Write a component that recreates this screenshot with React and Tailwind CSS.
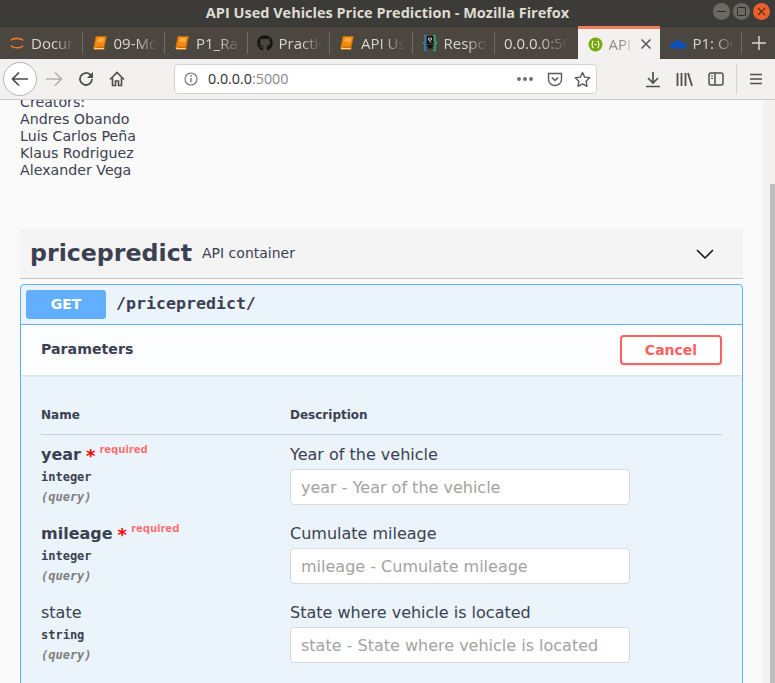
import React from 'react';
import { FaGithub } from 'react-icons/fa';

const uiFont = "font-['Open_Sans','Noto_Sans',sans-serif]";
const dejavu = "font-['DejaVu_Sans',sans-serif]";
const mono = "font-['DejaVu_Sans_Mono',monospace]";

const BookIcon = () => (
  <svg width="16" height="16" viewBox="0 0 16 16">
    <path d="M4 1.500h10.500L12 12H2z" fill="#f58a0b" stroke="#c96a00" strokeWidth="0.8" />
    <path d="M2 12c-.6 1.500 0 2.500 1 2.500h9l.4-2H3.500" fill="#ffd9a8" stroke="#c96a00" strokeWidth="0.8" />
    <path d="M6 4h6M5.500 6h6" stroke="#ffd9a8" strokeWidth="0.8" />
  </svg>
);

const JupyterIcon = () => (
  <svg width="16" height="16" viewBox="0 0 16 16" fill="none">
    <path d="M2 5.500C3.500 2.600 12.500 2.600 14 5.500" stroke="#f37726" strokeWidth="1.600" />
    <path d="M2 10.500C3.500 13.400 12.500 13.400 14 10.500" stroke="#f37726" strokeWidth="1.600" />
  </svg>
);

const RIcon = () => (
  <svg width="16" height="18" viewBox="0 0 16 18" fill="none">
    <path d="M5 1.500H3v6L1.500 9 3 10.500v6h2" stroke="#2f8fe0" strokeWidth="1.200" />
    <path d="M11 1.500h2v6L14.500 9 13 10.500v6h-2" stroke="#1fc9a0" strokeWidth="1.200" />
    <rect x="5" y="2" width="6" height="8" fill="#111" />
    <path d="M6.500 4h3v2h-3zM7 6l2 3" stroke="#ddd" strokeWidth="0.8" />
    <path d="M8 9v5M5.500 11.500 8 14.500l2.500-3z" fill="#111" stroke="#111" strokeWidth="1.200" />
  </svg>
);

const SwaggerIcon = () => (
  <svg width="15" height="15" viewBox="0 0 15 15" fill="none">
    <circle cx="7.500" cy="7.500" r="7" fill="#7aa90f" />
    <path d="M5.500 4C4 4.500 4.500 6.500 4 7.500 4.500 8.500 4 10.500 5.500 11M9.500 4c1.500.5 1 2.500 1.500 3.500-.5 1-0 3-1.500 3.500" stroke="#fff" strokeWidth="1.100" />
    <path d="M6.300 7.500h2.400" stroke="#fff" strokeWidth="1" />
  </svg>
);

const CloudIcon = () => (
  <svg width="18" height="14" viewBox="0 0 18 14">
    <path d="M2.500 12.500C.5 12.500 0 9.500 2 8.800 2 6 5 5 6.500 6.200 7.800 2.500 12.500 3 13 6.500c2.800-.2 4.500 1.500 4.500 3.500s-1.300 2.500-2.500 2.500z" fill="#0f4fb5" />
  </svg>
);

const tabs = [
  { icon: <JupyterIcon />, label: 'Documentation' },
  { icon: <BookIcon />, label: '09-Model' },
  { icon: <BookIcon />, label: 'P1_Random' },
  { icon: <FaGithub size={16} color="#151515" />, label: 'Practical' },
  { icon: <BookIcon />, label: 'API Used' },
  { icon: <RIcon />, label: 'Response' },
  { icon: null, label: '0.0.0.0:5000' },
  { icon: <SwaggerIcon />, label: 'API Used', active: true },
  { icon: <CloudIcon />, label: 'P1: OneDrive' },
];

function Tab({ icon, label, active, last }) {
  if (active) {
    return (
      <div className="w-[82px] h-[33px] -mt-[1px] shrink-0 bg-[#f2f1ef] border-t-[3px] border-[#ee7f5b] flex items-center pl-[10px] pr-[8px] gap-[6px] relative z-10">
        {icon}
        <span className="flex-1 overflow-hidden whitespace-nowrap text-[15px] text-[#8d8d8d] [mask-image:linear-gradient(to_right,black_55%,transparent)]">{label}</span>
        <svg width="12" height="12" viewBox="0 0 12 12" className="shrink-0">
          <path d="M1.500 1.500l9 9M10.500 1.500l-9 9" stroke="#555" strokeWidth="1.500" />
        </svg>
      </div>
    );
  }
  return (
    <div className="w-[82.500px] h-full shrink-0 flex items-center relative pl-[9px] pr-[6px] gap-[6px]">
      {icon}
      <span className="flex-1 overflow-hidden whitespace-nowrap text-[15px] text-[#d9d6d0] [mask-image:linear-gradient(to_right,black_50%,transparent_95%)]">{label}</span>
      {!last && <span className="absolute right-0 top-[5px] bottom-[5px] w-px bg-[#6f6b64]" />}
    </div>
  );
}

function ParamRow({ name, type, required, desc, placeholder }) {
  return (
    <div className="grid grid-cols-[249px_340px] h-[79px]">
      <div className={mono}>
        <div className={`${dejavu} h-[23px] flex items-start text-[#3b4151] leading-[23px]`}>
          <span className={`text-[16px] ${required ? 'font-bold' : ''}`}>{name}</span>
          {required && (
            <span className="text-[#ff0000] text-[18px] font-bold ml-[5px] leading-[26px]">*</span>
          )}
          {required && (
            <span className="text-[10px] font-bold text-[#ff6060] ml-[4px] leading-[14px] opacity-90">required</span>
          )}
        </div>
        <div className="text-[12px] font-semibold text-[#3b4151] h-[20px] leading-[20px] mt-[1px]">{type}</div>
        <div className="text-[12px] font-semibold italic text-[#808080] h-[20px] leading-[20px]">(query)</div>
      </div>
      <div className={dejavu}>
        <div className="text-[16px] leading-[23px] h-[23px] text-[#3b4151]">{desc}</div>
        <input
          readOnly
          placeholder={placeholder}
          className="w-[340px] h-[36px] mt-[3px] block bg-white border border-[#d9d9d9] rounded-[4px] px-[10px] text-[16px] placeholder:text-[#a3a3a3] outline-none"
        />
      </div>
    </div>
  );
}

export default function App() {
  return (
    <div className="w-[775px] h-[683px] overflow-hidden flex flex-col bg-[#fafafa]">
      {/* titlebar */}
      <div className={`${uiFont} h-[26px] shrink-0 bg-[#3c3b37] flex items-center justify-center relative`}>
        <span className="text-[14.500px] font-bold text-[#dfdbd2]">API Used Vehicles Price Prediction - Mozilla Firefox</span>
        <div className="absolute right-[5px] top-[3px] flex gap-[3px]">
          <div className="w-[17px] h-[17px] rounded-full bg-[#6a6964] flex items-center justify-center">
            <span className="w-[9px] h-px bg-[#2e2d2a]" />
          </div>
          <div className="w-[17px] h-[17px] rounded-full bg-[#6a6964] flex items-center justify-center">
            <span className="w-[9px] h-[9px] border border-[#2e2d2a] rounded-[1px]" />
          </div>
          <div className="w-[17px] h-[17px] rounded-full bg-[#e9602c] flex items-center justify-center">
            <svg width="9" height="9" viewBox="0 0 9 9"><path d="M1 1l7 7M8 1L1 8" stroke="#5a2a14" strokeWidth="1.200" /></svg>
          </div>
        </div>
      </div>

      {/* tabs */}
      <div className={`${uiFont} h-[33px] shrink-0 bg-[#4b4740] border-t border-[#35332e] flex items-stretch`}>
        {tabs.map((t, i) => (
          <Tab key={i} {...t} last={i === 6 || i === 7} />
        ))}
        <div className="flex-1 flex items-center justify-center">
          <svg width="14" height="14" viewBox="0 0 14 14"><path d="M7 0v14M0 7h14" stroke="#d9d6d0" strokeWidth="1.500" /></svg>
        </div>
      </div>

      {/* nav bar */}
      <div className={`${uiFont} h-[41px] shrink-0 bg-[#f2f1ef] border-b border-[#cccccc] flex items-center pl-[3px]`}>
        <div className="w-[34px] h-[34px] rounded-full bg-white border border-[#b5b5b5] flex items-center justify-center">
          <svg width="18" height="16" viewBox="0 0 18 16" fill="none"><path d="M17 8H2M8 1.500 1.500 8 8 14.500" stroke="#4a4a4a" strokeWidth="1.700" /></svg>
        </div>
        <svg width="18" height="16" viewBox="0 0 18 16" fill="none" className="ml-[8px]"><path d="M1 8h15M10 1.500 16.500 8 10 14.500" stroke="#b3b3b3" strokeWidth="1.700" /></svg>
        <svg width="16" height="16" viewBox="0 0 16 16" fill="none" className="ml-[15px]"><path d="M14 8a6 6 0 1 1-2-4.500L14.500 6" stroke="#4f4f4f" strokeWidth="1.800" /><path d="M15 1v6H9z" fill="#4f4f4f" /></svg>
        <svg width="16" height="16" viewBox="0 0 16 16" fill="none" className="ml-[15px]"><path d="M1 8.500 8 1.500l7 7M3.500 7v7.500h3V10h3v4.500h3V7" stroke="#4f4f4f" strokeWidth="1.600" /></svg>

        <div className="ml-[49px] w-[423px] h-[30px] bg-white border border-[#d4d3d0] rounded-[4px] flex items-center pl-[9px] pr-[5px]">
          <svg width="14" height="14" viewBox="0 0 14 14" fill="none"><circle cx="7" cy="7" r="6" stroke="#6f6f6f" strokeWidth="1.100" /><path d="M7 6v4.200" stroke="#6f6f6f" strokeWidth="1.300" /><circle cx="7" cy="3.800" r="0.900" fill="#6f6f6f" /></svg>
          <span className="ml-[10px] text-[14.300px] text-[#2e2e2e]">0.0.0.0<span className="text-[#8a8a8a]">:5000</span></span>
          <span className="ml-auto flex gap-[2px]">
            <span className="w-[4px] h-[4px] rounded-full bg-[#6f6f6f]" />
            <span className="w-[4px] h-[4px] rounded-full bg-[#6f6f6f]" />
            <span className="w-[4px] h-[4px] rounded-full bg-[#6f6f6f]" />
          </span>
          <svg width="16" height="15" viewBox="0 0 16 15" fill="none" className="ml-[14px]"><path d="M1.500 1.500h13v6a6.500 6 0 0 1-13 0z" stroke="#5a5a5a" strokeWidth="1.400" /><path d="M4.800 5.500 8 8.500l3.200-3" stroke="#5a5a5a" strokeWidth="1.600" /></svg>
          <svg width="17" height="17" viewBox="0 0 17 17" fill="none" className="ml-[11px]"><path d="M8.500 1.500l2.200 4.600 5 .7-3.600 3.500.9 5-4.500-2.400-4.500 2.400.9-5L1.300 6.800l5-.7z" stroke="#5a5a5a" strokeWidth="1.400" strokeLinejoin="round" /></svg>
        </div>

        <svg width="16" height="17" viewBox="0 0 16 17" fill="none" className="ml-[48px]"><path d="M8 1v10M3 7l5 5 5-5M1 15.500h14" stroke="#4f4f4f" strokeWidth="1.700" /></svg>
        <svg width="17" height="15" viewBox="0 0 17 15" fill="none" className="ml-[15px]"><path d="M1.500 1v13M5.500 1v13M9.500 1v13M12 1l4 13" stroke="#4f4f4f" strokeWidth="1.800" /></svg>
        <svg width="16" height="14" viewBox="0 0 16 14" fill="none" className="ml-[15px]"><rect x="1" y="1" width="14" height="12" rx="2" stroke="#4f4f4f" strokeWidth="1.500" /><path d="M7 1v12" stroke="#4f4f4f" strokeWidth="1.500" /><path d="M3 4h2M3 6.500h2" stroke="#4f4f4f" strokeWidth="1" /></svg>
        <span className="ml-[12px] w-px h-[30px] bg-[#d4d3d0]" />
        <svg width="14" height="12" viewBox="0 0 14 12" fill="none" className="ml-[12px]"><path d="M1 1.500h12M1 6h12M1 10.500h12" stroke="#4f4f4f" strokeWidth="1.600" /></svg>
      </div>

      {/* page */}
      <div className="flex-1 min-h-0 flex overflow-hidden">
        <div className="w-[763px] shrink-0 overflow-hidden">
          <div className="px-[20px] -mt-[6px]">
            <div className={`${dejavu} text-[14.200px] leading-[17px] text-[#3b4151]`}>
              <div>Creators:</div>
              <div>Andres Obando</div>
              <div>Luis Carlos Peña</div>
              <div>Klaus Rodriguez</div>
              <div>Alexander Vega</div>
            </div>

            <div className={`${dejavu} mt-[50px] h-[50px] bg-[#f4f4f4] border-b border-[#c4c4c4] flex items-center pl-[10px] pr-[28px] text-[#3b4151]`}>
              <span className="text-[23.700px] font-bold">pricepredict</span>
              <span className="text-[14px] ml-[10px]">API container</span>
              <svg width="20" height="12" viewBox="0 0 20 12" fill="none" className="ml-auto"><path d="M2 2l8 8 8-8" stroke="#111" strokeWidth="1.500" /></svg>
            </div>

            <div className={`${dejavu} mt-[5px] border border-[#61affe] rounded-t-[4px] bg-[#ebf3fb] h-[500px]`}>
              <div className="h-[40px] border-b border-[#61affe] flex items-center pl-[5px]">
                <span className="w-[80px] h-[29px] rounded-[3px] bg-[#61affe] text-white text-[14px] font-bold flex items-center justify-center">GET</span>
                <span className={`${mono} ml-[10px] text-[16.600px] font-semibold text-[#3b4151]`}>/pricepredict/</span>
              </div>

              <div className="h-[50px] bg-[#fbfdff] shadow-[0_1px_2px_rgba(0,0,0,0.1)] flex items-center justify-between pl-[20px] pr-[20px]">
                <span className="text-[14.200px] font-bold text-[#3b4151]">Parameters</span>
                <span className="w-[102px] h-[30px] bg-white border-2 border-[#ff6060] rounded-[4px] shadow-[0_1px_2px_rgba(0,0,0,0.1)] text-[14px] font-bold text-[#ff6060] flex items-center justify-center">Cancel</span>
              </div>

              <div className="px-[20px]">
                <div className="mt-[30px] h-[30px] border-b border-[#c5cfe0] grid grid-cols-[249px_1fr] text-[12px] font-bold text-[#3b4151] leading-[20px]">
                  <span>Name</span>
                  <span>Description</span>
                </div>
                <div className="pt-[8px]">
                  <ParamRow name="year" type="integer" required desc="Year of the vehicle" placeholder="year - Year of the vehicle" />
                  <ParamRow name="mileage" type="integer" required desc="Cumulate mileage" placeholder="mileage - Cumulate mileage" />
                  <ParamRow name="state" type="string" desc="State where vehicle is located" placeholder="state - State where vehicle is located" />
                </div>
              </div>
            </div>
          </div>
        </div>
        {/* scrollbar */}
        <div className="flex-1 bg-[#f2f1ef] pl-[7px] pt-[84px]">
          <div className="h-full bg-[#bdbdbd]" />
        </div>
      </div>
    </div>
  );
}
